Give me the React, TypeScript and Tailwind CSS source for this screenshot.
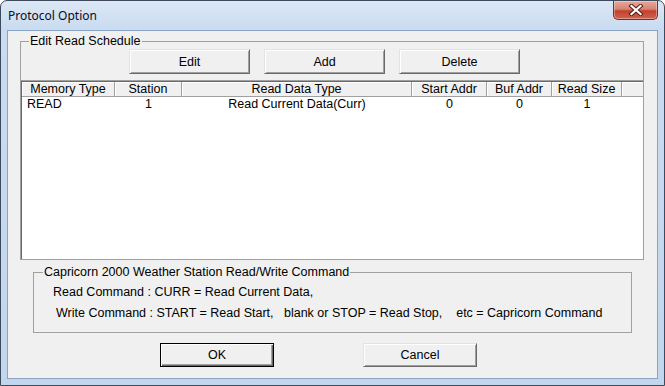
import React from "react";

const btn =
  "h-[25px] border border-t-[#e3e3e3] border-l-[#e3e3e3] border-r-[#696969] border-b-[#696969] bg-[#f0f0f0] shadow-[inset_1px_1px_0_#ffffff,inset_-1px_-1px_0_#a0a0a0] text-[12.5px] leading-[14px] text-black flex items-center justify-center";

const cols = [
  { label: "Memory Type", w: "w-[93px]", val: "READ", left: true },
  { label: "Station", w: "w-[67px]", val: "1" },
  { label: "Read Data Type", w: "w-[230px]", val: "Read Current Data(Curr)" },
  { label: "Start Addr", w: "w-[75px]", val: "0" },
  { label: "Buf Addr", w: "w-[65px]", val: "0" },
  { label: "Read Size", w: "w-[70px]", val: "1" },
];

function CloseButton() {
  return (
    <div className="w-[45px] h-[19px] rounded-b-[5px] border border-t-0 border-[#7a2c22] bg-[linear-gradient(to_bottom,#e4a89c_0%,#d88474_45%,#c2412e_55%,#d0634f_100%)] shadow-[inset_0_0_0_1px_rgba(255,255,255,0.35)] flex items-center justify-center">
      <svg width="16" height="12" viewBox="0 0 16 12">
        <path d="M3.5 2 L12.5 10 M12.5 2 L3.5 10" stroke="#5a1f18" strokeWidth="4.2" strokeLinecap="square" fill="none" />
        <path d="M3.5 2 L12.5 10 M12.5 2 L3.5 10" stroke="#ffffff" strokeWidth="2.2" strokeLinecap="square" fill="none" />
      </svg>
    </div>
  );
}

export default function App() {
  return (
    <div
      className="w-[665px] h-[386px] flex flex-col border border-[#3d4a5c] rounded-t-[7px] px-[6px] pb-[6px] bg-[linear-gradient(to_bottom,#dbe7f5_0px,#c9dbf0_30px,#c2d6ee_100%)] overflow-hidden"
      style={{ fontFamily: '"Liberation Sans", Arial, sans-serif' }}
    >
      {/* title bar */}
      <div className="h-[29px] flex items-start justify-between shrink-0">
        <div
          className="mt-[7px] pl-[1px] text-[12px] leading-[16px] text-[#0b0b1a]"
          style={{ fontFamily: '"Noto Sans", "Open Sans", sans-serif' }}
        >
          Protocol Option
        </div>
        <CloseButton />
      </div>

      {/* client area */}
      <div className="flex-1 border border-[#8ba3c2] bg-[#f0f0f0] flex flex-col pt-[3px] text-[12.5px] leading-[14px] text-black">
        {/* group 1 */}
        <fieldset className="ml-[12px] w-[624px] border border-[#a0a0a0] flex flex-col">
          <legend className="ml-[8px] px-[1px] leading-[14px]">Edit Read Schedule</legend>
          <div className="flex gap-[14px] pl-[108px] mt-[1px]">
            <button className={`${btn} w-[121px]`}>Edit</button>
            <button className={`${btn} w-[121px]`}>Add</button>
            <button className={`${btn} w-[121px]`}>Delete</button>
          </div>
          {/* list view */}
          <div className="mt-[6px] mx-[-1px] mb-[-1px] h-[180px] bg-white border border-[#a0a0a0] shadow-[inset_1px_1px_0_#696969] flex flex-col">
            <div className="flex h-[15px] ml-[1px] mt-[1px] bg-[#f0f0f0] border-b border-[#a0a0a0]">
              {cols.map((c) => (
                <div
                  key={c.label}
                  className={`${c.w} shrink-0 border-r border-[#a0a0a0] shadow-[inset_1px_1px_0_#ffffff] flex items-center justify-center leading-[13px]`}
                >
                  {c.label}
                </div>
              ))}
              <div className="flex-1 shadow-[inset_1px_1px_0_#ffffff]" />
            </div>
            <div className="flex h-[13px] ml-[1px]">
              {cols.map((c) => (
                <div
                  key={c.label}
                  className={`${c.w} shrink-0 flex items-center ${c.left ? "justify-start pl-[5px]" : "justify-center"}`}
                >
                  {c.val}
                </div>
              ))}
            </div>
          </div>
        </fieldset>

        {/* group 2 */}
        <fieldset className="mt-[5px] ml-[25px] w-[599px] border border-[#a0a0a0] flex flex-col pb-[12px]">
          <legend className="ml-[9px] px-[1px] leading-[14px]">Capricorn 2000 Weather Station Read/Write Command</legend>
          <div className="mt-[6px] pl-[19px] whitespace-pre">Read Command : CURR = Read Current Data,</div>
          <div className="mt-[7px] pl-[22px] whitespace-pre">
            {"Write Command : START = Read Start,   blank or STOP = Read Stop,    etc = Capricorn Command"}
          </div>
        </fieldset>

        {/* OK / Cancel */}
        <div className="flex mt-[10px] pl-[152px] gap-[89px]">
          <button className="w-[114px] h-[24px] border border-black bg-[#f0f0f0] shadow-[inset_1px_1px_0_#ffffff,inset_-1px_-1px_0_#696969,inset_-2px_-2px_0_#a0a0a0] text-[12.5px] leading-[14px] flex items-center justify-center">
            OK
          </button>
          <button className="w-[114px] h-[24px] border border-t-[#e3e3e3] border-l-[#e3e3e3] border-r-[#696969] border-b-[#696969] bg-[#f0f0f0] shadow-[inset_1px_1px_0_#ffffff,inset_-1px_-1px_0_#a0a0a0] text-[12.5px] leading-[14px] flex items-center justify-center">
            Cancel
          </button>
        </div>
      </div>
    </div>
  );
}
